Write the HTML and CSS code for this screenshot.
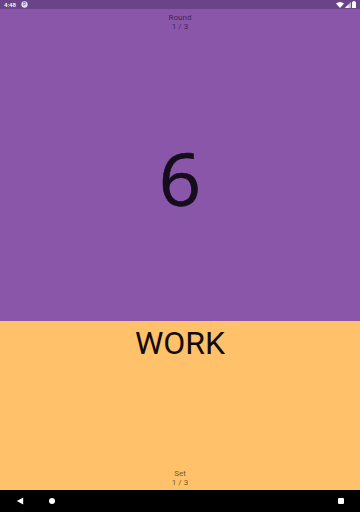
FILE: index.html
```html
<!DOCTYPE html>
<html>
<head>
<meta charset="utf-8">
<link rel="stylesheet" href="styles.css">
</head>
<body>
<div class="screen">
  <div class="status">
    <div class="status-left">
      <span class="time">4:48</span>
      <svg class="notif" width="7" height="7" viewBox="0 0 10 10"><circle cx="5" cy="5" r="4.5" fill="#e6dcee"/><text x="5" y="7.6" font-size="7" text-anchor="middle" fill="#6b4389" font-family="Roboto">P</text></svg>
    </div>
    <div class="status-right">
      <svg width="8" height="6" viewBox="0 0 16 12"><path d="M0 3 Q8 -3 16 3 L8 12 Z" fill="#fff"/></svg>
      <svg width="6" height="6" viewBox="0 0 12 12"><path d="M12 0 L12 12 L0 12 Z" fill="#cbb9d8"/><path d="M7 5 L7 12 L0 12 Z" fill="#fff"/></svg>
      <svg width="4" height="7" viewBox="0 0 8 14"><rect x="2.5" y="0" width="3" height="2" fill="#fff"/><rect x="0" y="1.5" width="8" height="12.5" rx="1" fill="#fff"/></svg>
    </div>
  </div>
  <div class="top">
    <div class="label">
      <div>Round</div>
      <div>1 / 3</div>
    </div>
    <div class="count">6</div>
  </div>
  <div class="bottom">
    <div class="phase">WORK</div>
    <div class="label set">
      <div>Set</div>
      <div>1 / 3</div>
    </div>
  </div>
  <div class="nav">
    <svg class="back" width="8" height="8" viewBox="0 0 10 10"><path d="M1 5 L9 0.5 L9 9.5 Z" fill="#fff"/></svg>
    <div class="home"></div>
    <div class="spacer"></div>
    <div class="recents"></div>
  </div>
</div>
</body>
</html>
```
FILE: styles.css
```css
html, body {
  margin: 0;
  padding: 0;
}
body {
  width: 360px;
  height: 512px;
  overflow: hidden;
  font-family: Roboto, "Liberation Sans", sans-serif;
}
.screen {
  display: flex;
  flex-direction: column;
  height: 512px;
}
.status {
  height: 9px;
  background: #6b4389;
  display: flex;
  align-items: center;
  justify-content: space-between;
  padding: 0 4px;
  flex: none;
}
.status-left {
  display: flex;
  align-items: center;
  gap: 5px;
}
.time {
  color: #fff;
  font-size: 6px;
  line-height: 6px;
  font-weight: 500;
}
.notif {
  display: block;
}
.status-right {
  display: flex;
  align-items: center;
  gap: 1px;
}
.status-right svg {
  display: block;
}
.top {
  height: 312px;
  background: #8a56a9;
  flex: none;
  display: flex;
  flex-direction: column;
  align-items: center;
}
.label {
  font-size: 8px;
  line-height: 9px;
  text-align: center;
  color: rgba(20, 10, 30, 0.68);
  padding-top: 4px;
}
.count {
  font-family: "Open Sans", "Noto Sans", sans-serif;
  font-size: 74px;
  line-height: 74px;
  color: #150c1c;
  margin-top: 110px;
  -webkit-text-stroke: 0.6px #150c1c;
}
.bottom {
  flex: 1;
  background: #ffc16a;
  display: flex;
  flex-direction: column;
  align-items: center;
  justify-content: space-between;
}
.phase {
  font-size: 32px;
  line-height: 32px;
  color: #120c08;
  padding-top: 6px;
}
.label.set {
  padding-top: 0;
  padding-bottom: 3px;
  color: rgba(40, 25, 5, 0.68);
}
.nav {
  height: 22px;
  background: #000;
  flex: none;
  display: flex;
  align-items: center;
  padding: 0 16px;
}
.back {
  display: block;
}
.home {
  width: 6px;
  height: 6px;
  border-radius: 50%;
  background: #fff;
  margin-left: 25px;
}
.spacer {
  flex: 1;
}
.recents {
  width: 6px;
  height: 6px;
  background: #fff;
  border-radius: 1px;
}
```
